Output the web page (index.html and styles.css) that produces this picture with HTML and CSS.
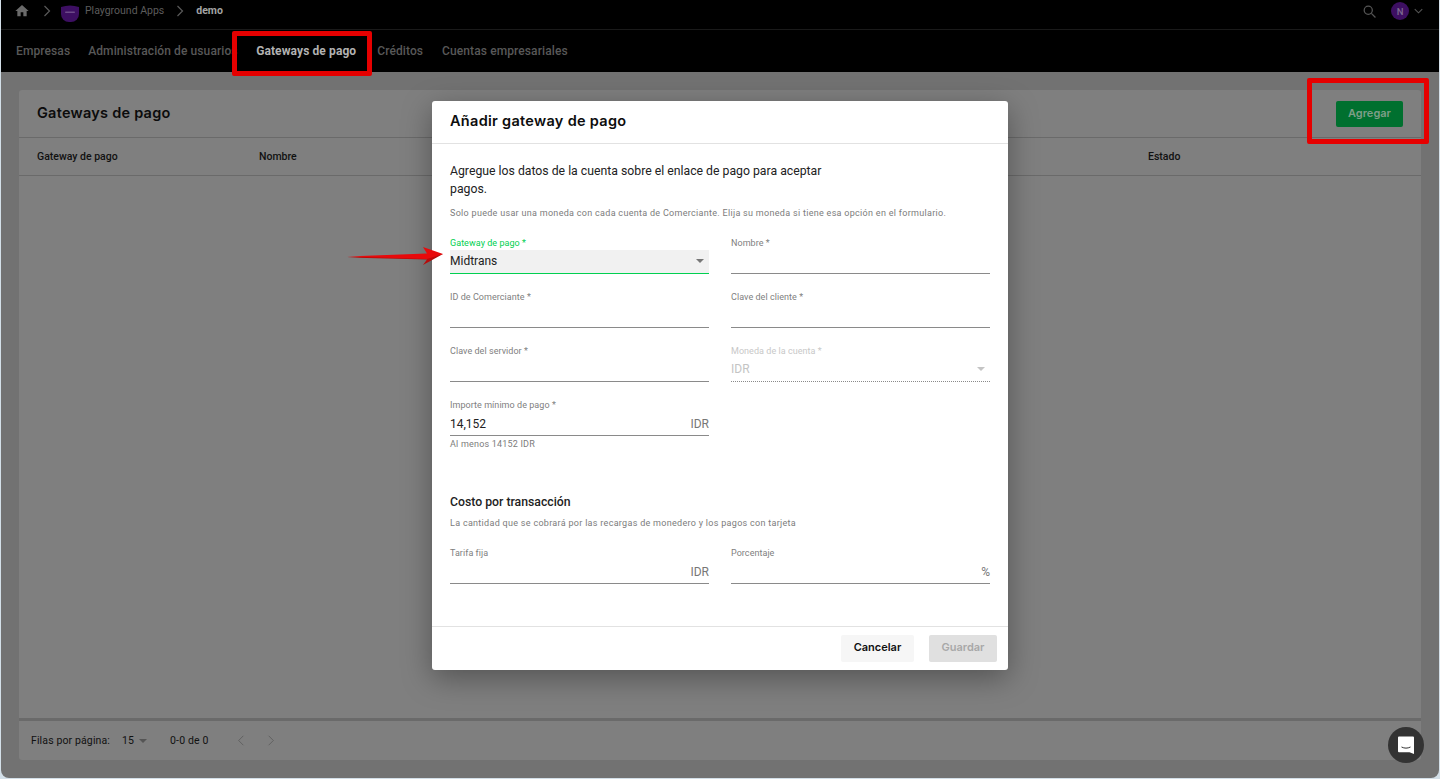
FILE: index.html
```html
<!DOCTYPE html>
<html lang="es">
<head>
<meta charset="utf-8">
<title>Gateways de pago</title>
<link rel="stylesheet" href="styles.css">
</head>
<body>
<div class="app">
  <header class="topbar">
    <div class="crumbs">
      <svg class="home" viewBox="0 0 24 24"><path d="M10 20v-6h4v6h5v-8h3L12 3 2 12h3v8z"/></svg>
      <svg class="crumb-chev" viewBox="0 0 10 12"><path d="M2.5 1l5 5-5 5"/></svg>
      <svg class="logo" viewBox="0 0 18 18"><path d="M0 3c3-1 6-1.500 9-1.500S15 2 18 3v7a8 8 0 0 1-8 8H8a8 8 0 0 1-8-8z"/><rect x="4" y="7.500" width="10" height="1.500" rx=".7" class="logo-t"/></svg>
      <span class="crumb-app">Playground Apps</span>
      <svg class="crumb-chev" viewBox="0 0 10 12"><path d="M2.5 1l5 5-5 5"/></svg>
      <span class="crumb-cur">demo</span>
    </div>
    <div class="user">
      <svg class="search" viewBox="0 0 24 24"><circle cx="10" cy="10" r="6.5"/><path d="M15 15l6.5 6.5"/></svg>
      <span class="avatar">N</span>
      <svg class="user-chev" viewBox="0 0 12 8"><path d="M1 1.500l5 5 5-5"/></svg>
    </div>
  </header>
  <nav class="tabs">
    <span class="tab">Empresas</span>
    <span class="tab">Administración de usuarios</span>
    <span class="tab tab-active">Gateways de pago</span>
    <span class="tab">Créditos</span>
    <span class="tab">Cuentas empresariales</span>
  </nav>
  <main class="content">
    <section class="card">
      <div class="card-head">
        <h1 class="card-title">Gateways de pago</h1>
        <button class="btn-add">Agregar</button>
      </div>
      <div class="thead">
        <span class="th th-gateway">Gateway de pago</span>
        <span class="th th-name">Nombre</span>
        <span class="th th-state">Estado</span>
      </div>
      <div class="tbody"></div>
      <div class="pager">
        <span class="pager-label">Filas por página:</span>
        <span class="pager-size">15</span>
        <svg class="caret pager-caret" viewBox="0 0 10 5"><path d="M0 0h10L5 5z"/></svg>
        <span class="pager-range">0-0 de 0</span>
        <svg class="pager-chev" viewBox="0 0 10 14"><path d="M8 1L2 7l6 6"/></svg>
        <svg class="pager-chev" viewBox="0 0 10 14"><path d="M2 1l6 6-6 6"/></svg>
      </div>
    </section>
  </main>

  <div class="modal">
    <div class="modal-head">Añadir gateway de pago</div>
    <div class="modal-body">
      <p class="intro">Agregue los datos de la cuenta sobre el enlace de pago para aceptar pagos.</p>
      <p class="hint">Solo puede usar una moneda con cada cuenta de Comerciante. Elija su moneda si tiene esa opción en el formulario.</p>
      <div class="grid">
        <div class="field field-focus">
          <label class="lab">Gateway de pago *</label>
          <div class="ctl">Midtrans<svg class="caret" viewBox="0 0 10 5"><path d="M0 0h10L5 5z"/></svg></div>
        </div>
        <div class="field"><label class="lab">Nombre *</label><div class="ctl"></div></div>
        <div class="field"><label class="lab">ID de Comerciante *</label><div class="ctl"></div></div>
        <div class="field"><label class="lab">Clave del cliente *</label><div class="ctl"></div></div>
        <div class="field"><label class="lab">Clave del servidor *</label><div class="ctl"></div></div>
        <div class="field field-off">
          <label class="lab">Moneda de la cuenta *</label>
          <div class="ctl">IDR<svg class="caret" viewBox="0 0 10 5"><path d="M0 0h10L5 5z"/></svg></div>
        </div>
        <div class="field">
          <label class="lab">Importe mínimo de pago *</label>
          <div class="ctl">14,152<span class="unit">IDR</span></div>
          <div class="help">Al menos 14152 IDR</div>
        </div>
      </div>
      <h2 class="sub">Costo por transacción</h2>
      <p class="hint hint-sub">La cantidad que se cobrará por las recargas de monedero y los pagos con tarjeta</p>
      <div class="grid">
        <div class="field"><label class="lab">Tarifa fija</label><div class="ctl"><span class="unit">IDR</span></div></div>
        <div class="field"><label class="lab">Porcentaje</label><div class="ctl"><span class="unit">%</span></div></div>
      </div>
    </div>
    <div class="modal-foot">
      <button class="btn-cancel">Cancelar</button>
      <button class="btn-save">Guardar</button>
    </div>
  </div>

  <div class="mark mark-tab"></div>
  <div class="mark mark-add"></div>
  <svg class="arrow" viewBox="0 0 96 24"><path class="arrow-dark" d="M0 12.500L80 14.500 76 20 96 9z"/><path class="arrow-main" d="M0 11.500L80 8.500 76 2 96 9 80 14z"/></svg>
  <div class="chat">
    <svg viewBox="0 0 18 18"><path d="M1 1.500a1 1 0 0 1 1-1h14a1 1 0 0 1 1 1V18l-4.500-1.800H2a1 1 0 0 1-1-1z" class="chat-b"/><path d="M4.500 11c3 1.500 6 1.500 9 0" class="chat-s"/></svg>
  </div>
</div>
</body>
</html>
```

FILE: styles.css
```css
* { box-sizing: border-box; }
html, body { margin: 0; height: 779px; overflow: hidden; }
body { background: #d3dfe8; font-family: Roboto, "Liberation Sans", sans-serif; color: #111; }

.app {
  position: relative;
  width: 1438px;
  height: 778px;
  margin: 0 1px;
  display: flex;
  flex-direction: column;
  background: #727272;
  border-radius: 0 0 8px 8px;
  overflow: hidden;
}

/* top bar */
.topbar {
  height: 30px;
  flex: none;
  background: #000;
  border-bottom: 1px solid #1a1a1a;
  display: flex;
  align-items: center;
  justify-content: space-between;
  padding: 0 16px 8px 13px;
}
.crumbs { display: flex; align-items: center; }
.home { width: 16px; height: 16px; fill: #6a6a6a; }
.crumb-chev { width: 10px; height: 12px; fill: none; stroke: #5a5a5a; stroke-width: 1.200; margin: 0 11px 0 12px; }
.logo { width: 18px; height: 18px; margin: 4px 6px 0 -2px; fill: #3d0f62; }
.logo-t { fill: #6d4a88; }
.crumb-app { font-size: 10.500px; color: #5c5c5c; }
.crumb-app + .crumb-chev { margin: 0 11px 0 11px; }
.crumb-cur { font-size: 10.500px; font-weight: 700; color: #a4a4a4; }
.user { display: flex; align-items: center; padding-top: 1px; }
.search { width: 15px; height: 15px; fill: none; stroke: #565656; stroke-width: 2; margin-right: 14px; }
.avatar {
  width: 18px; height: 18px; border-radius: 50%;
  background: #3d0f62; color: #7e6a90;
  font-size: 9.500px; font-weight: 500;
  display: flex; align-items: center; justify-content: center;
}
.user-chev { width: 9px; height: 6px; fill: none; stroke: #565656; stroke-width: 1.400; margin-left: 5px; }

/* tabs */
.tabs {
  height: 42px;
  flex: none;
  background: #000;
  display: flex;
  align-items: center;
  gap: 18px;
  padding: 0 15px 1px;
}
.tab { font-size: 12px; font-weight: 500; letter-spacing: .1px; color: #585858; white-space: nowrap; }
.tab-active { color: #b2b2b2; font-weight: 700; margin: 0 3px 0 .5px; }
.tab-active + .tab + .tab { margin-left: 1px; }

/* card */
.content { flex: 1; min-height: 0; padding: 18px 18px 18px 18px; }
.card {
  height: 100%;
  background: #7f7f7f;
  border-radius: 3px;
  display: flex;
  flex-direction: column;
}
.card-head {
  height: 48px; flex: none;
  display: flex; align-items: center; justify-content: space-between;
  padding: 0 18px;
  border-bottom: 1px solid #6a6a6a;
}
.card-title { margin: 0 0 2px; font-family: Inter, Lato, sans-serif; font-size: 14.500px; font-weight: 600; letter-spacing: .25px; color: #0c0c0c; }
.btn-add {
  width: 67px; height: 26px; border: 0; border-radius: 2px; padding: 0 0 2px;
  background: #00702f; color: #7d9e88;
  font-family: Inter, Lato, sans-serif; font-size: 11px; font-weight: 600;
}
.thead {
  height: 38px; flex: none;
  display: flex; align-items: center;
  padding-left: 18px;
  border-bottom: 1px solid #6a6a6a;
}
.th { font-size: 10.500px; font-weight: 500; color: #111; }
.th-gateway { width: 222px; }
.th-name { width: 889px; }
.tbody { flex: 1; border-bottom: 3px solid #6a6a6a; }
.pager { height: 39px; flex: none; display: flex; align-items: center; padding-left: 12px; font-size: 10.500px; letter-spacing: .13px; color: #111; }
.pager-size { margin-left: 12px; }
.caret { width: 8px; height: 4px; fill: #555; }
.pager-caret { margin-left: 5px; }
.pager-range { margin-left: 23px; }
.pager-chev { width: 8px; height: 11px; fill: none; stroke: #606060; stroke-width: 1.200; margin-left: 22px; }
.pager-range + .pager-chev { margin-left: 29px; }

/* modal */
.modal {
  position: absolute;
  left: 431px;
  top: 101px;
  width: 576px;
  height: 569px;
  background: #fff;
  border-radius: 3px;
  display: flex;
  flex-direction: column;
  box-shadow: 0 8px 30px rgba(0,0,0,.35);
}
.modal-head {
  height: 43px; flex: none;
  display: flex; align-items: center;
  padding: 0 18px 3px;
  border-bottom: 1px solid #e2e2e2;
  font-family: Inter, Lato, sans-serif; font-size: 14.500px; font-weight: 600; letter-spacing: .3px; color: #0d0d0d;
}
.modal-body { flex: 1; padding: 18px 18px 0; }
.intro { margin: 0; width: 400px; font-size: 12.250px; line-height: 18px; color: #222; }
.hint { margin: 8px 0 0; font-size: 9px; line-height: 14px; letter-spacing: .3px; color: #7c7c7c; white-space: nowrap; }
.grid { display: grid; grid-template-columns: 259px 259px; column-gap: 22px; row-gap: 17px; margin-top: 17px; }
.field { height: 37px; }
.lab { display: block; height: 13px; font-size: 9px; line-height: 12px; letter-spacing: .05px; color: #808080; }
.ctl {
  height: 24px;
  display: flex; align-items: center; justify-content: space-between;
  border-bottom: 1px solid #8a8a8a;
  font-size: 12px; color: #222;
}
.unit { margin-left: auto; font-size: 12px; color: #777; }
.help { margin-top: 2px; font-size: 9px; line-height: 12px; letter-spacing: .2px; color: #7c7c7c; }
.field-focus .lab { color: #00d050; }
.field-focus .ctl { background: #f1f1f1; border-bottom-color: #00d050; padding: 0 5px 1px 0; }
.field-focus .caret { fill: #777; }
.field-off .lab { color: #c8c8c8; }
.field-off .ctl { color: #c4c4c4; border-bottom: 1px dotted #8a8a8a; padding: 0 5px 1px 0; }
.field-off .caret { fill: #c4c4c4; }
.sub { margin: 57px 0 0; font-size: 12.250px; line-height: 18px; font-weight: 500; color: #222; }
.hint-sub { margin-top: 5px; }
.modal-foot {
  height: 44px; flex: none;
  display: flex; align-items: center; justify-content: flex-end; gap: 15px;
  padding: 0 11px;
  border-top: 1px solid #e2e2e2;
}
.btn-cancel, .btn-save {
  height: 27px; border: 0; border-radius: 2px; padding: 0 0 3px;
  font-family: Inter, Lato, sans-serif; font-size: 11px; font-weight: 600;
}
.btn-cancel { width: 73px; background: #f6f6f6; color: #111; }
.btn-save { width: 68px; background: #e0e0e0; color: #a8a8a8; }

/* annotations */
.mark { position: absolute; border: 5px solid #e60000; border-radius: 2px; }
.mark-tab { left: 231px; top: 31px; width: 140px; height: 45px; }
.mark-add { left: 1306px; top: 78px; width: 122px; height: 66px; }
.arrow { position: absolute; left: 346px; top: 245px; width: 96px; height: 24px; }
.arrow-main { fill: #e8090b; }
.arrow-dark { fill: #b80a0a; }

.chat {
  position: absolute; left: 1387px; top: 727px;
  width: 36px; height: 36px; border-radius: 50%;
  background: #333;
  display: flex; align-items: center; justify-content: center;
}
.chat svg { width: 18px; height: 18px; }
.chat-b { fill: #fff; }
.chat-s { fill: none; stroke: #333; stroke-width: 1; }
```
